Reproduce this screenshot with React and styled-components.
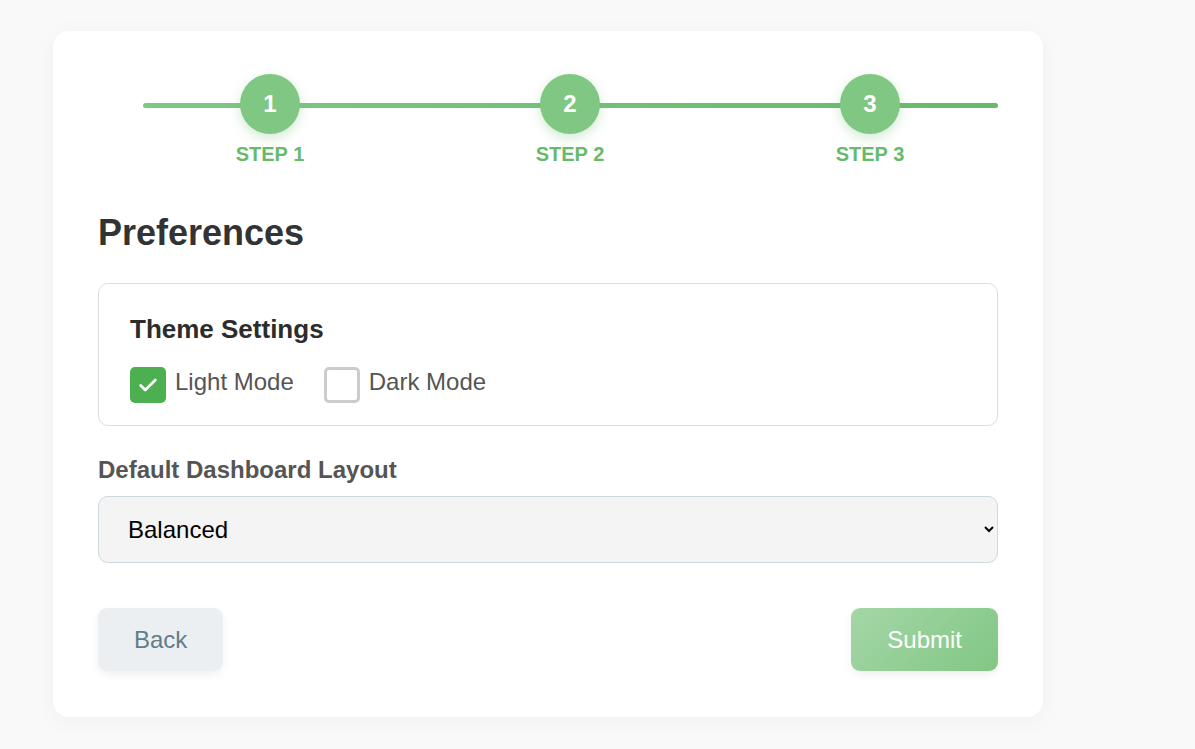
import React, { useState } from 'react';
import styled, { createGlobalStyle } from 'styled-components';

const GlobalStyle = createGlobalStyle`
  * { box-sizing: border-box; }
  body {
    margin: 0;
    background: #f9f9f9;
    font-family: "Liberation Sans", Arial, sans-serif;
  }
`;

const Page = styled.div`
  padding: 31px 0 32px 53px;
`;

const Card = styled.div`
  width: 990px;
  background: #fff;
  border-radius: 16px;
  padding: 43px 45px 46px;
  box-shadow: 0 4px 24px rgba(0, 0, 0, 0.04);
`;

const Progress = styled.div`
  position: relative;
  display: grid;
  grid-template-columns: repeat(3, 300px);
  padding-left: 22px;
`;

const Track = styled.div`
  position: absolute;
  left: 45px;
  right: 0;
  top: 29px;
  height: 5px;
  border-radius: 3px;
  background: linear-gradient(90deg, #81c784, #66bb6a);
`;

const Step = styled.div`
  position: relative;
  display: flex;
  flex-direction: column;
  align-items: center;
`;

const Circle = styled.div`
  width: 60px;
  height: 60px;
  border-radius: 50%;
  background: #81c784;
  color: #fff;
  font-size: 24px;
  font-weight: 700;
  display: flex;
  align-items: center;
  justify-content: center;
  box-shadow: 0 4px 12px rgba(102, 187, 106, 0.3);
`;

const StepLabel = styled.div`
  margin-top: 9px;
  font-size: 20px;
  font-weight: 700;
  color: #66bb6a;
`;

const Heading = styled.h2`
  margin: 46px 0 30px;
  font-size: 36px;
  line-height: 41px;
  font-weight: 700;
  color: #333;
`;

const Panel = styled.div`
  border: 1px solid #ddd;
  border-radius: 10px;
  padding: 30px 31px 22px;
`;

const PanelTitle = styled.h3`
  margin: 0 0 23px;
  font-size: 26px;
  line-height: 30px;
  font-weight: 700;
  color: #2c2c2c;
`;

const Options = styled.div`
  display: flex;
  gap: 30px;
`;

const Option = styled.label`
  display: flex;
  align-items: center;
  gap: 9px;
  font-size: 24px;
  color: #555;
  cursor: pointer;
`;

const Box = styled.span`
  width: 36px;
  height: 36px;
  border-radius: 5px;
  display: flex;
  align-items: center;
  justify-content: center;
  background: ${p => (p.$checked ? '#4caf50' : '#fff')};
  border: ${p => (p.$checked ? 'none' : '3px solid #ccc')};
`;

const OptionText = styled.span`
  margin-top: -7px;
`;

const FieldLabel = styled.label`
  display: block;
  margin: 30px 0 12px;
  font-size: 24px;
  line-height: 28px;
  font-weight: 700;
  color: #555;
`;

const Select = styled.select`
  width: 100%;
  height: 67px;
  padding: 0 8px 0 25px;
  font-family: "Liberation Sans", Arial, sans-serif;
  font-size: 24px;
  color: #000;
  background: #f3f4f3;
  border: 1px solid #cfd8dc;
  border-radius: 10px;
`;

const Actions = styled.div`
  display: flex;
  justify-content: space-between;
  margin-top: 45px;
`;

const Button = styled.button`
  height: 63px;
  padding: 0 36px;
  border: none;
  border-radius: 9px;
  font-family: "Liberation Sans", Arial, sans-serif;
  font-size: 24px;
  cursor: pointer;
  background: ${p => (p.$primary ? 'linear-gradient(135deg, #a5d6a7, #81c784)' : '#eceff1')};
  color: ${p => (p.$primary ? '#fff' : '#607d8b')};
  box-shadow: 0 4px 10px rgba(0, 0, 0, 0.06);
`;

const Check = () => (
  <svg width="22" height="22" viewBox="0 0 24 24" fill="none" stroke="#fff" strokeWidth="3" strokeLinecap="round" strokeLinejoin="round">
    <path d="M4 12.5l5 5L20 6.5" />
  </svg>
);

const steps = [1, 2, 3];

const App = () => {
  const [mode, setMode] = useState('light');

  return (
    <>
      <GlobalStyle />
      <Page>
        <Card>
          <Progress>
            <Track />
            {steps.map(n => (
              <Step key={n}>
                <Circle>{n}</Circle>
                <StepLabel>STEP {n}</StepLabel>
              </Step>
            ))}
          </Progress>

          <Heading>Preferences</Heading>

          <Panel>
            <PanelTitle>Theme Settings</PanelTitle>
            <Options>
              <Option onClick={() => setMode('light')}>
                <Box $checked={mode === 'light'}>{mode === 'light' && <Check />}</Box>
                <OptionText>Light Mode</OptionText>
              </Option>
              <Option onClick={() => setMode('dark')}>
                <Box $checked={mode === 'dark'}>{mode === 'dark' && <Check />}</Box>
                <OptionText>Dark Mode</OptionText>
              </Option>
            </Options>
          </Panel>

          <FieldLabel htmlFor="layout">Default Dashboard Layout</FieldLabel>
          <Select id="layout" defaultValue="balanced">
            <option value="compact">Compact</option>
            <option value="balanced">Balanced</option>
            <option value="spacious">Spacious</option>
          </Select>

          <Actions>
            <Button>Back</Button>
            <Button $primary>Submit</Button>
          </Actions>
        </Card>
      </Page>
    </>
  );
};

export default App;
